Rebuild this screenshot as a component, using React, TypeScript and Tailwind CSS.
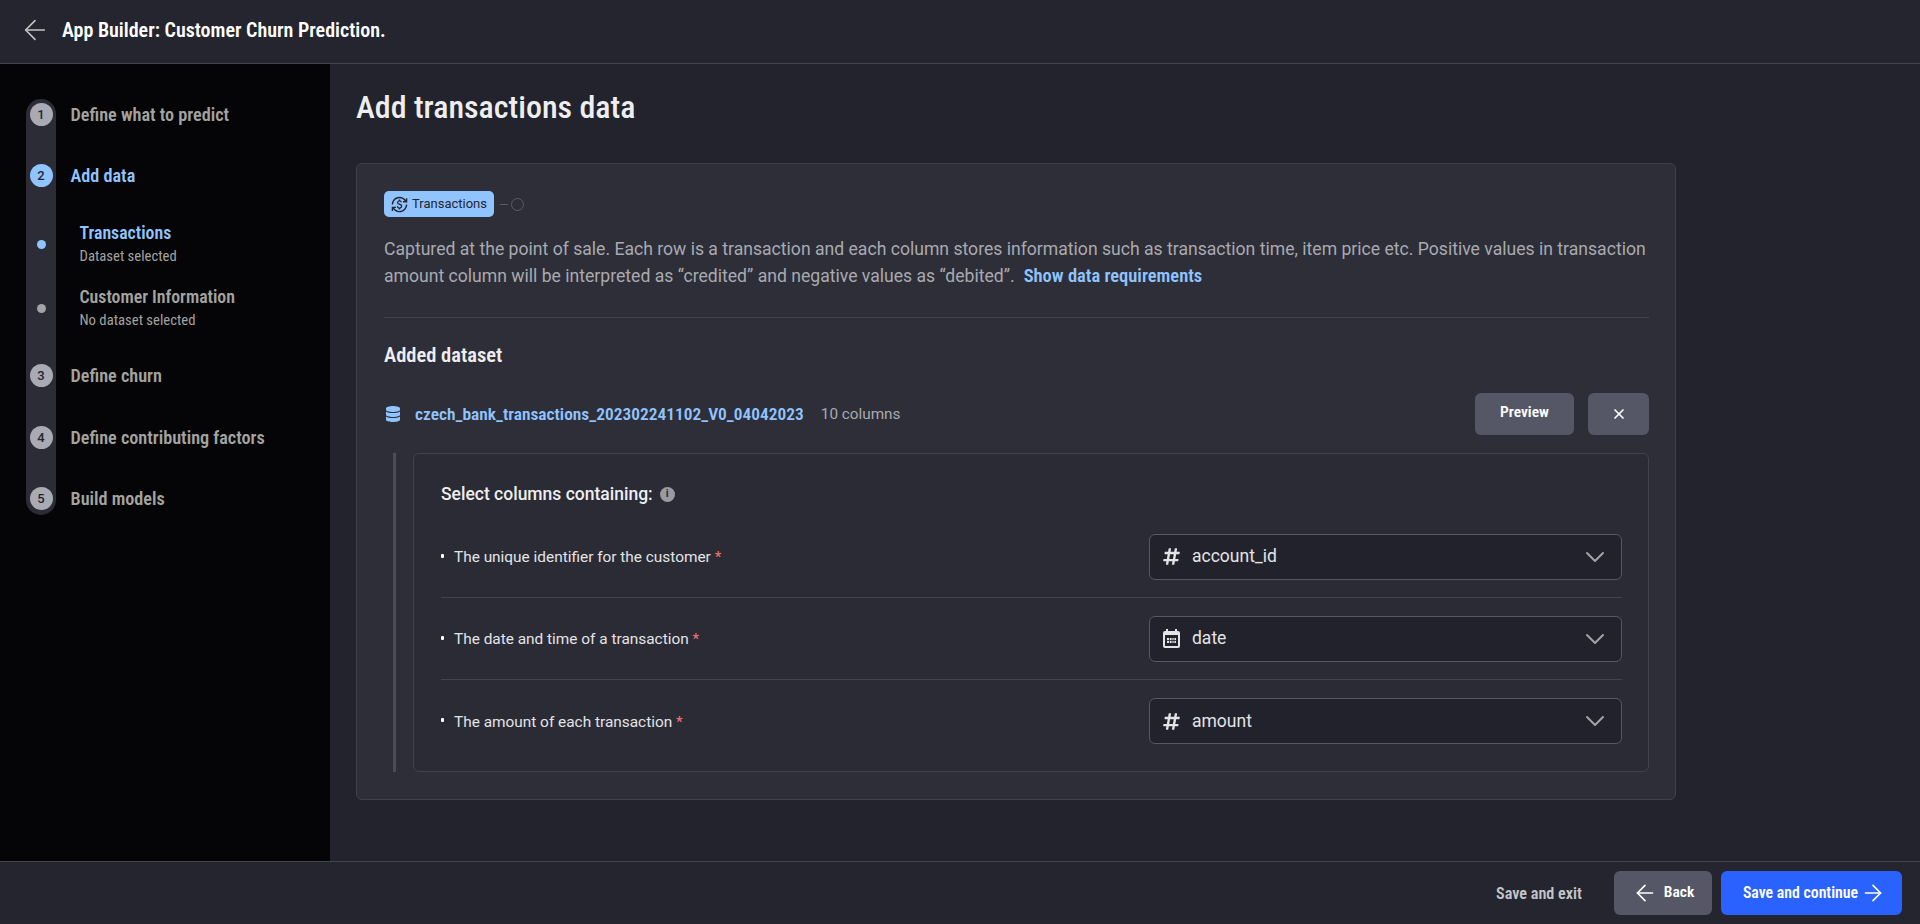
import { ArrowLeft, ArrowRight, ChevronDown, X } from 'lucide-react';
import { FaDatabase, FaHashtag } from 'react-icons/fa';
import { MdCurrencyExchange } from 'react-icons/md';

const heading = "font-['Roboto',sans-serif] [font-stretch:75%]";
const body = "font-['Roboto',sans-serif]";

const columns = [
  { label: 'The unique identifier for the customer', value: 'account_id', kind: 'number' },
  { label: 'The date and time of a transaction', value: 'date', kind: 'date' },
  { label: 'The amount of each transaction', value: 'amount', kind: 'number' },
];

function CalendarIcon() {
  return (
    <svg width="17" height="19" viewBox="0 0 17 19" fill="none" className="text-[#e4e4e8]">
      <path d="M3 0h2v2h7V0h2v2h1a2 2 0 0 1 2 2v13a2 2 0 0 1-2 2H2a2 2 0 0 1-2-2V4a2 2 0 0 1 2-2h1V0Z" fill="currentColor" />
      <rect x="2" y="6" width="13" height="11" fill="#21222b" />
      <path d="M4 9h9v5H4z" fill="currentColor" />
      <path d="M6.5 9v5M9 9v5M11 9v5M4 11.5h9" stroke="#21222b" strokeWidth="0.8" />
    </svg>
  );
}

function Step({ n, label, active, h, first, last }: { n: number; label: string; active?: boolean; h: string; first?: boolean; last?: boolean }) {
  return (
    <div className={`flex ${h}`}>
      <div className={`flex w-[30px] shrink-0 justify-center bg-[#2b2c36] pt-[4px] ${first ? 'rounded-t-[15px]' : ''} ${last ? 'rounded-b-[15px]' : ''}`}>
        <span className={`flex h-[23px] w-[23px] items-center justify-center rounded-full text-[13px] font-medium text-[#24252e] ${body} ${active ? 'bg-[#90c4ff]' : 'bg-[#a9aab4]'}`}>
          {n}
        </span>
      </div>
      <span className={`ml-[14.5px] h-[31px] text-[18.2px] font-semibold leading-[31px] ${heading} ${active ? 'text-[#90c4ff]' : 'text-[#a3a39f]'}`}>
        {label}
      </span>
    </div>
  );
}

function SubStep({ title, note, active, h }: { title: string; note: string; active?: boolean; h: string }) {
  return (
    <div className={`flex ${h}`}>
      <div className="flex w-[30px] shrink-0 justify-center bg-[#2b2c36] pt-[19.5px]">
        <span className={`h-[9px] w-[9px] rounded-full ${active ? 'bg-[#90c4ff]' : 'bg-[#a3a3a8]'}`} />
      </div>
      <div className="ml-[23.5px]">
        <p className={`text-[17.8px] font-semibold leading-[26px] ${heading} ${active ? 'text-[#90c4ff]' : 'text-[#a3a39f]'}`}>{title}</p>
        <p className={`text-[14.7px] leading-[20px] text-[#a3a39f] ${heading}`}>{note}</p>
      </div>
    </div>
  );
}

export default function App() {
  return (
    <div className="flex h-[924px] flex-col overflow-hidden bg-[#22232c] text-white">
      <header className="flex h-[64px] shrink-0 items-center border-b border-[#42434f] bg-[#24252e] pb-[4px] pl-[19px]">
        <ArrowLeft size={32} strokeWidth={1.2} className="text-[#c4c4ca]" />
        <h1 className={`ml-[11px] text-[20px] font-semibold ${heading}`}>App Builder: Customer Churn Prediction.</h1>
      </header>

      <div className="flex min-h-0 flex-1">
        <aside className="w-[330px] shrink-0 bg-[#050508] pl-[26px] pt-[35px]">
          <Step n={1} label="Define what to predict" h="h-[61px]" first />
          <Step n={2} label="Add data" h="h-[60px]" active />
          <SubStep title="Transactions" note="Dataset selected" h="h-[64px]" active />
          <SubStep title="Customer Information" note="No dataset selected" h="h-[76px]" />
          <Step n={3} label="Define churn" h="h-[62px]" />
          <Step n={4} label="Define contributing factors" h="h-[61px]" />
          <Step n={5} label="Build models" h="h-[32px]" last />
        </aside>

        <main className="min-w-0 flex-1 pl-[26px] pt-[23px]">
          <h2 className={`h-[41px] text-[32px] font-medium leading-[40px] text-[#eeeef0] ${heading}`}>Add transactions data</h2>

          <section className="mt-[35px] h-[637px] w-[1320px] rounded-[6px] border border-[#3f404c] bg-[#2d2e38] pl-[27px] pr-[26px] pt-[27px]">
            <div className="flex items-center">
              <span className={`flex h-[26px] w-[110px] items-center justify-center gap-[4px] rounded-[5px] bg-[#90c4ff] text-[13px] text-[#24252e] ${body}`}>
                <MdCurrencyExchange size={17} />
                Transactions
              </span>
              <span className="ml-[6px] h-px w-[8px] bg-[#5a5b68]" />
              <span className="ml-[3px] h-[13px] w-[13px] rounded-full border border-[#5a5b68]" />
            </div>

            <p className={`mt-[19px] whitespace-nowrap text-[17.6px] leading-[27px] text-[#a9aab0] ${body}`}>
              Captured at the point of sale. Each row is a transaction and each column stores information such as transaction time, item price etc. Positive values in transaction
              <br />
              amount column will be interpreted as “credited” and negative values as “debited”.
              <span className={`ml-[9px] text-[18.5px] font-semibold text-[#90c4ff] ${heading}`}>Show data requirements</span>
            </p>

            <div className="mt-[27px] h-px bg-[#42434f]" />

            <h3 className={`mt-[24px] text-[20.5px] font-semibold leading-[26px] text-[#eeeef0] ${heading}`}>Added dataset</h3>

            <div className="mt-[25px] flex h-[42px] items-center">
              <FaDatabase size={16} className="ml-[1px] text-[#90c4ff]" />
              <span className={`ml-[14px] text-[17.4px] font-semibold text-[#90c4ff] ${heading}`}>czech_bank_transactions_202302241102_V0_04042023</span>
              <span className={`ml-[17px] text-[15.3px] text-[#a9aab0] ${body}`}>10 columns</span>
              <button className={`ml-auto h-[42px] w-[99px] rounded-[6px] bg-[#565766] pb-[2px] text-[15.5px] font-semibold ${heading}`}>Preview</button>
              <button className="ml-[14px] flex h-[42px] w-[61px] items-center justify-center rounded-[6px] bg-[#565766]">
                <X size={16} strokeWidth={2.5} />
              </button>
            </div>

            <div className="mt-[18px] flex">
              <div className="ml-[9px] w-[3px] bg-[#4a4b5c]" />
              <div className="ml-[17px] h-[319px] flex-1 rounded-[6px] border border-[#41424e] bg-[#2a2b34] pl-[27px] pr-[26px] pt-[28px]">
                <h4 className={`flex items-center text-[17.5px] font-medium leading-[24px] text-[#eeeef0] ${body}`}>
                  Select columns containing:
                  <span className={`ml-[7px] flex h-[15px] w-[15px] items-center justify-center rounded-full bg-[#9a9aa2] text-[11px] font-bold text-[#2b2c35] ${body}`}>i</span>
                </h4>
                <div className="mt-[10px]">
                  {columns.map((col, i) => (
                    <div key={col.label} className={`flex h-[82px] items-center ${i < 2 ? 'border-b border-[#42434f]' : ''}`}>
                      <span className="mb-[2px] h-[4px] w-[3px] rounded-[1px] bg-white" />
                      <span className={`ml-[10px] mt-[3px] text-[15.4px] text-[#e4e4e8] ${body}`}>
                        {col.label} <span className="text-[#f87171]">*</span>
                      </span>
                      <div className="ml-auto flex h-[46px] w-[473px] items-center rounded-[6px] border border-[#565766] bg-[#21222b] pl-[13px] pr-[10px]">
                        <span className="flex w-[17px] justify-center">
                          {col.kind === 'date' ? <CalendarIcon /> : <FaHashtag size={19} className="text-[#e4e4e8]" />}
                        </span>
                        <span className={`ml-[12px] text-[17.5px] text-[#e4e4e8] ${body}`}>{col.value}</span>
                        <ChevronDown size={32} strokeWidth={1.5} className="ml-auto text-[#a3a3a8]" />
                      </div>
                    </div>
                  ))}
                </div>
              </div>
            </div>
          </section>
        </main>
      </div>

      <footer className="flex h-[63px] shrink-0 items-center justify-end border-t border-[#42434f] bg-[#24252e] pr-[18px]">
        <span className={`mr-[32px] mt-[3px] text-[16.2px] font-semibold text-[#c4c4ca] ${heading}`}>Save and exit</span>
        <button className={`flex h-[44px] w-[98px] items-center justify-center gap-[6px] rounded-[6px] bg-[#565766] text-[15.5px] font-semibold ${heading}`}>
          <ArrowLeft size={26} strokeWidth={1.5} />
          Back
        </button>
        <button className={`ml-[9px] flex h-[44px] w-[181px] items-center justify-center gap-[2px] rounded-[6px] bg-[#2962ff] pl-[6px] text-[15.8px] font-semibold ${heading}`}>
          Save and continue
          <ArrowRight size={26} strokeWidth={1.5} />
        </button>
      </footer>
    </div>
  );
}
